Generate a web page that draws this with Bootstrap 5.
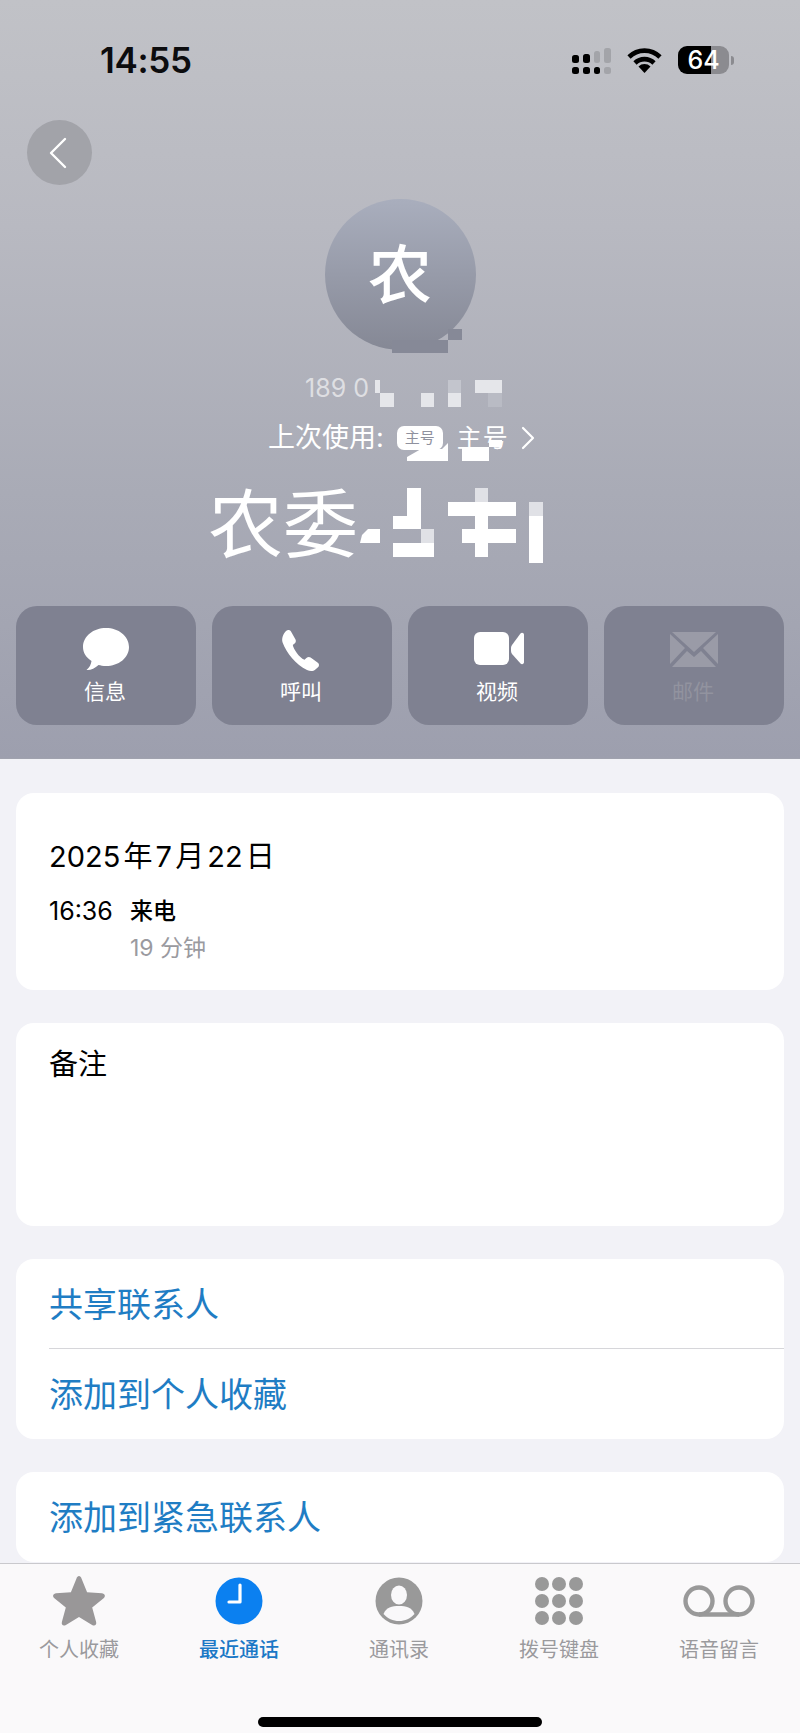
<!DOCTYPE html>
<html lang="zh-CN">
<head>
  <meta charset="UTF-8" />
  <meta name="viewport" content="width=device-width, initial-scale=1.0"/>
  <title>最近通话</title>
  <link href="https://cdn.jsdelivr.net/npm/bootstrap@5.3.0/dist/css/bootstrap.min.css" rel="stylesheet"/>
  <style>
    body {
      width: 800px;
      height: 1733px;
      overflow: hidden;
      background-color: #f2f2f7;
      font-family: Inter, "Noto Sans CJK SC", sans-serif;
      color: #000;
    }
    .hero {
      height: 759px;
      background: linear-gradient(180deg, #c1c2c7 0%, #b8b9c1 30%, #a9abb6 65%, #9d9fae 100%);
      border-bottom: 1px solid #a0a2ae;
    }
    .mosaic { position: absolute; top: 0; left: 0; pointer-events: none; }
    .status-row { height: 120px; padding: 40px 66px 0 100px; }
    .clock-text { font-size: 35px; font-weight: 600; line-height: 40px; letter-spacing: -.3px; color: #0c0c0e; }
    .status-icons { padding-top: 6px; }
    .signal-icon { margin-left: 2px; }
    .battery-box {
      width: 51px; height: 28px; border-radius: 9px;
      background: linear-gradient(90deg, #000 65%, #8b8b90 65%);
      color: #fff; font-size: 25px; font-weight: 500; line-height: 28px; text-align: center;
    }
    .battery-nub { width: 3px; height: 9px; margin-left: 2px; border-radius: 0 3px 3px 0; background: #8b8b90; }
    .back-btn { width: 65px; height: 65px; margin-left: 27px; padding-right: 4px; background: #a2a3a9; }
    .avatar-circle {
      width: 151px; height: 151px; margin: 14px auto 0;
      background: linear-gradient(180deg, #a9aebd 0%, #858895 100%);
      color: #fff; font-size: 64px; font-weight: 500; line-height: 151px; text-align: center;
    }
    .phone-line { margin-top: 23px; padding-left: 305px; height: 30px; line-height: 30px; font-size: 25px; color: rgba(255,255,255,.6); }
    .last-used { margin-top: 20px; padding-left: 268px; height: 30px; line-height: 30px; font-size: 27px; color: #fff; }
    .sim-tag { width: 46px; height: 24px; margin: 0 14px 0 13px; border-radius: 7px; background: #fff; color: #8f919e; font-size: 15px; line-height: 24px; text-align: center; }
    .sim-name { width: 56px; letter-spacing: 1px; font-size: 25px; }
    .big-name { margin-top: 32px; padding-left: 208px; height: 80px; line-height: 80px; font-size: 75px; color: #fff; }
    .action-row { margin-top: 41px; padding: 0 16px; gap: 16px; }
    .action-btn {
      width: 180px; height: 119px; border-radius: 21px;
      background: #7f8191; color: #fff; font-size: 21px; line-height: 28px;
    }
    .action-btn svg { height: 48px; margin: 19px 0 5px; display: block; }
    .action-btn span { padding-right: 2px; }
    .action-off { color: #92939f; }
    .scroll-area { padding: 34px 16px 0; gap: 33px; overflow: hidden; min-height: 0; }
    .sheet { background: #fff; border-radius: 18px; border: 0; flex: none; }
    .sheet-date { height: 197px; padding: 44px 33px 0; }
    .date-line { font-size: 29px; line-height: 40px; word-spacing: -5px; }
    .detail-row { margin-top: 16px; }
    .time-col { width: 81px; font-size: 25px; line-height: 37px; }
    .call-kind { font-size: 23px; line-height: 37px; font-weight: 500; }
    .call-length { font-size: 23px; line-height: 37px; color: #9a9a9f; }
    .sheet-note { height: 203px; padding: 22px 33px 0; font-size: 29px; line-height: 40px; }
    .link-row { height: 90px; padding: 1px 0 0 0; margin-left: 33px; line-height: 90px; font-size: 34px; color: #1f7dc4; background: transparent; border: 0; }
    .link-row.with-line { border-bottom: 1px solid #d6d6da; }
    .tab-strip { height: 170px; flex: none; background: #faf9fa; border-top: 1px solid #c9c9cd; padding: 10px 0 0 0; }
    .tab-row { margin-left: -1px; }
    .tab-cell { width: 160px; height: 96px; color: #9a9a9d; font-size: 20px; line-height: 28px; }
    .tab-cell svg { height: 54px; display: block; margin-bottom: 8px; }
    .tab-active { color: #1b78c6; font-weight: 500; }
    .home-bar { width: 284px; height: 10px; margin: 47px auto 0; border-radius: 5px; background: #000; }
  </style>
</head>
<body class="d-flex flex-column">

  <!-- Header -->
  <div class="hero position-relative flex-shrink-0">
    <div class="status-row d-flex justify-content-between align-items-start">
      <div class="clock-text">14:55</div>
      <div class="status-icons d-flex align-items-center">
        <svg width="39" height="27" viewBox="0 0 39 27" class="signal-icon me-3">
          <g fill="#000">
            <rect x="0" y="8" width="7" height="8" rx="2.5"/><rect x="11" y="7" width="7" height="9" rx="2.5"/>
            <rect x="0" y="20" width="7" height="7" rx="2.5"/><rect x="11" y="20" width="7" height="7" rx="2.5"/><rect x="22" y="20" width="6" height="7" rx="2.5"/>
          </g>
          <g fill="#a3a4a9">
            <rect x="22" y="4" width="6" height="12" rx="2.5"/><rect x="32" y="1" width="7" height="15" rx="2.5"/><rect x="32" y="20" width="7" height="7" rx="2.5"/>
          </g>
        </svg>
        <svg width="35" height="26" viewBox="0 0 35 26" class="me-3">
          <path d="M2 10 A 22 22 0 0 1 33 10" fill="none" stroke="#000" stroke-width="4.6"/>
          <path d="M8 16 A 13.5 13.5 0 0 1 27 16" fill="none" stroke="#000" stroke-width="4.6"/>
          <path d="M11.5 19.5 A 8.5 8.5 0 0 1 23.5 19.5 L17.5 26 Z" fill="#000"/>
        </svg>
        <div class="battery-box">64</div>
        <div class="battery-nub"></div>
      </div>
    </div>

    <div class="back-btn rounded-circle d-flex align-items-center justify-content-center">
      <svg width="20" height="32" viewBox="0 0 20 32"><path d="M17 2 L3 16 L17 30" fill="none" stroke="#fff" stroke-width="2.4" stroke-linecap="round" stroke-linejoin="round"/></svg>
    </div>

    <div class="avatar-circle rounded-circle">农</div>
    <div class="phone-line">189 0</div>
    <div class="last-used d-flex align-items-center">
      <span>上次使用:</span>
      <span class="sim-tag">主号</span>
      <span class="sim-name">主号</span>
      <svg width="14" height="24" viewBox="0 0 14 24" class="ms-2"><path d="M2 2 L12 12 L2 22" fill="none" stroke="#fff" stroke-width="2.2" stroke-linecap="round" stroke-linejoin="round"/></svg>
    </div>
    <div class="big-name">农委</div>

    <div class="action-row d-flex">
      <div class="action-btn d-flex flex-column align-items-center">
        <svg width="48" height="48" viewBox="0 0 48 48"><path d="M24 3 C36.5 3 47 11 47 22 C47 33 36.5 41 24 41 C21 41 18.5 40.5 16.5 40 C13 43.5 8 45.5 4.5 45 C7.5 42.5 9 39.5 9.5 36 C4 32.5 1 27.5 1 22 C1 11 11.5 3 24 3 Z" fill="#fff"/></svg>
        <span>信息</span>
      </div>
      <div class="action-btn d-flex flex-column align-items-center">
        <svg width="48" height="48" viewBox="2 0 48 48"><path d="M10 6 C11.5 4.5 14 4.5 15 6.5 L19.5 14.5 C20.2 16 19.8 17.5 18.6 18.6 L16.8 20 C17.5 24 23 32.5 28.5 34.8 L30.4 33 C31.6 31.8 33.2 31.5 34.6 32.4 L41.5 37.4 C43.4 38.7 43.5 40.8 42 42.3 L39.4 44.6 C37 46.6 34 46.4 31 45 C20 40 10.5 28 6.6 17.5 C5.4 13.5 7 9 10 6 Z" fill="#fff"/></svg>
        <span>呼叫</span>
      </div>
      <div class="action-btn d-flex flex-column align-items-center">
        <svg width="52" height="48" viewBox="-1 0 52 48"><rect x="1" y="7" width="35" height="33" rx="6" fill="#fff"/><path d="M39 20 L47.5 8.5 C49 7 51 8 51 10 L51 37 C51 39 49 40 47.5 38.5 L39 29 C38.3 28 38 27 38 26 L38 23 C38 22 38.3 21 39 20 Z" fill="#fff"/></svg>
        <span>视频</span>
      </div>
      <div class="action-btn action-off d-flex flex-column align-items-center">
        <svg width="50" height="48" viewBox="0 0 50 48">
          <path d="M3 7 L47 7 L25 27 Z M1 9 L1 39 L16 23 Z M49 9 L49 39 L34 23 Z M3 42 L18 26 L25 32 L32 26 L47 42 Z" fill="#9a9ba7"/>
        </svg>
        <span>邮件</span>
      </div>
    </div>

    <!-- blurred out parts of the number and name -->
    <svg class="mosaic" width="800" height="759" viewBox="0 0 800 759">
      <g fill="#868997"><rect x="392" y="340" width="56" height="13"/><rect x="448" y="329" width="14" height="11"/></g>
      <g fill="#e5e6ea">
        <rect x="375" y="380" width="5" height="13"/><rect x="380" y="393" width="14" height="14"/>
        <rect x="421" y="393" width="13" height="14"/><rect x="448" y="393" width="13" height="14"/>
        <rect x="475" y="380" width="27" height="13"/>
      </g>
      <rect x="448" y="380" width="13" height="13" fill="#c3c5cd"/>
      <rect x="488" y="393" width="14" height="14" fill="#b9bbc4"/>
      <g fill="#fff">
        <path d="M407 461 L407 457 L421 449 L442 449 L448 443 L448 461 Z"/>
        <rect x="462" y="447" width="27" height="14"/><rect x="489" y="440" width="13" height="7"/>
        <path d="M360 543 L362 535 L368 529 L380 529 L380 543 Z"/>
        <rect x="407" y="488" width="14" height="28"/><rect x="393" y="516" width="28" height="13"/>
        <rect x="393" y="543" width="41" height="14"/>
        <rect x="448" y="502" width="68" height="14"/><rect x="475" y="516" width="13" height="41"/>
        <rect x="462" y="529" width="54" height="14"/><rect x="529" y="516" width="14" height="47"/>
      </g>
      <g fill="#e0e1e6">
        <rect x="421" y="529" width="13" height="14"/><rect x="475" y="488" width="13" height="14"/><rect x="529" y="502" width="14" height="14"/>
      </g>
    </svg>
  </div>

  <!-- Details -->
  <div class="scroll-area d-flex flex-column flex-grow-1">
    <div class="sheet sheet-date">
      <div class="date-line">2025 年 7 月 22 日</div>
      <div class="detail-row d-flex">
        <div class="time-col">16:36</div>
        <div>
          <div class="call-kind">来电</div>
          <div class="call-length">19 分钟</div>
        </div>
      </div>
    </div>
    <div class="sheet sheet-note">备注</div>
    <div class="sheet list-group list-group-flush">
      <div class="list-group-item link-row with-line">共享联系人</div>
      <div class="list-group-item link-row">添加到个人收藏</div>
    </div>
    <div class="sheet">
      <div class="link-row">添加到紧急联系人</div>
    </div>
  </div>

  <!-- Tab bar -->
  <div class="tab-strip">
    <div class="tab-row d-flex">
      <div class="tab-cell d-flex flex-column align-items-center">
        <svg width="54" height="54" viewBox="1 1 52 52"><path d="M27 3 C28 3 29 4 29.5 5.5 L34.8 18.5 L49 19.6 C52 20 52.8 22.5 51 24 L39.7 33.3 L43.5 47.3 C44.2 50 42 51.4 39.6 50 L27 42.4 L14.4 50 C12 51.4 9.8 50 10.5 47.3 L14.3 33.3 L3 24 C1.2 22.5 2 20 5 19.6 L19.2 18.5 L24.5 5.5 C25 4 26 3 27 3 Z" fill="#999798"/></svg>
        <span>个人收藏</span>
      </div>
      <div class="tab-cell tab-active d-flex flex-column align-items-center">
        <svg width="54" height="54" viewBox="0 0 54 54"><circle cx="27" cy="27" r="23.5" fill="#0b80f0"/><path d="M28 11 L28 28 L17 28" fill="none" stroke="#fff" stroke-width="3.2" stroke-linecap="round" stroke-linejoin="round"/></svg>
        <span>最近通话</span>
      </div>
      <div class="tab-cell d-flex flex-column align-items-center">
        <svg width="54" height="54" viewBox="0 0 54 54"><circle cx="27" cy="27" r="23.5" fill="#999"/><ellipse cx="27" cy="21" rx="8" ry="9.5" fill="#f9f8fa"/><path d="M11.5 40 C14 33.5 20 32 27 32 C34 32 40 33.5 42.5 40 C38.5 44.5 33 47 27 47 C21 47 15.5 44.5 11.5 40 Z" fill="#f9f8fa"/></svg>
        <span>通讯录</span>
      </div>
      <div class="tab-cell d-flex flex-column align-items-center">
        <svg width="54" height="54" viewBox="0 0 54 54">
          <g fill="#999">
            <circle cx="10" cy="10" r="7"/><circle cx="27" cy="10" r="7"/><circle cx="44" cy="10" r="7"/>
            <circle cx="10" cy="27" r="7"/><circle cx="27" cy="27" r="7"/><circle cx="44" cy="27" r="7"/>
            <circle cx="10" cy="44" r="7"/><circle cx="27" cy="44" r="7"/><circle cx="44" cy="44" r="7"/>
          </g>
        </svg>
        <span>拨号键盘</span>
      </div>
      <div class="tab-cell d-flex flex-column align-items-center">
        <svg width="72" height="54" viewBox="0 0 72 54"><g fill="none" stroke="#999" stroke-width="4.4"><circle cx="16" cy="27" r="13.5"/><circle cx="56" cy="27" r="13.5"/><path d="M16 40.5 L56 40.5"/></g></svg>
        <span>语音留言</span>
      </div>
    </div>
    <div class="home-bar"></div>
  </div>

</body>
</html>
